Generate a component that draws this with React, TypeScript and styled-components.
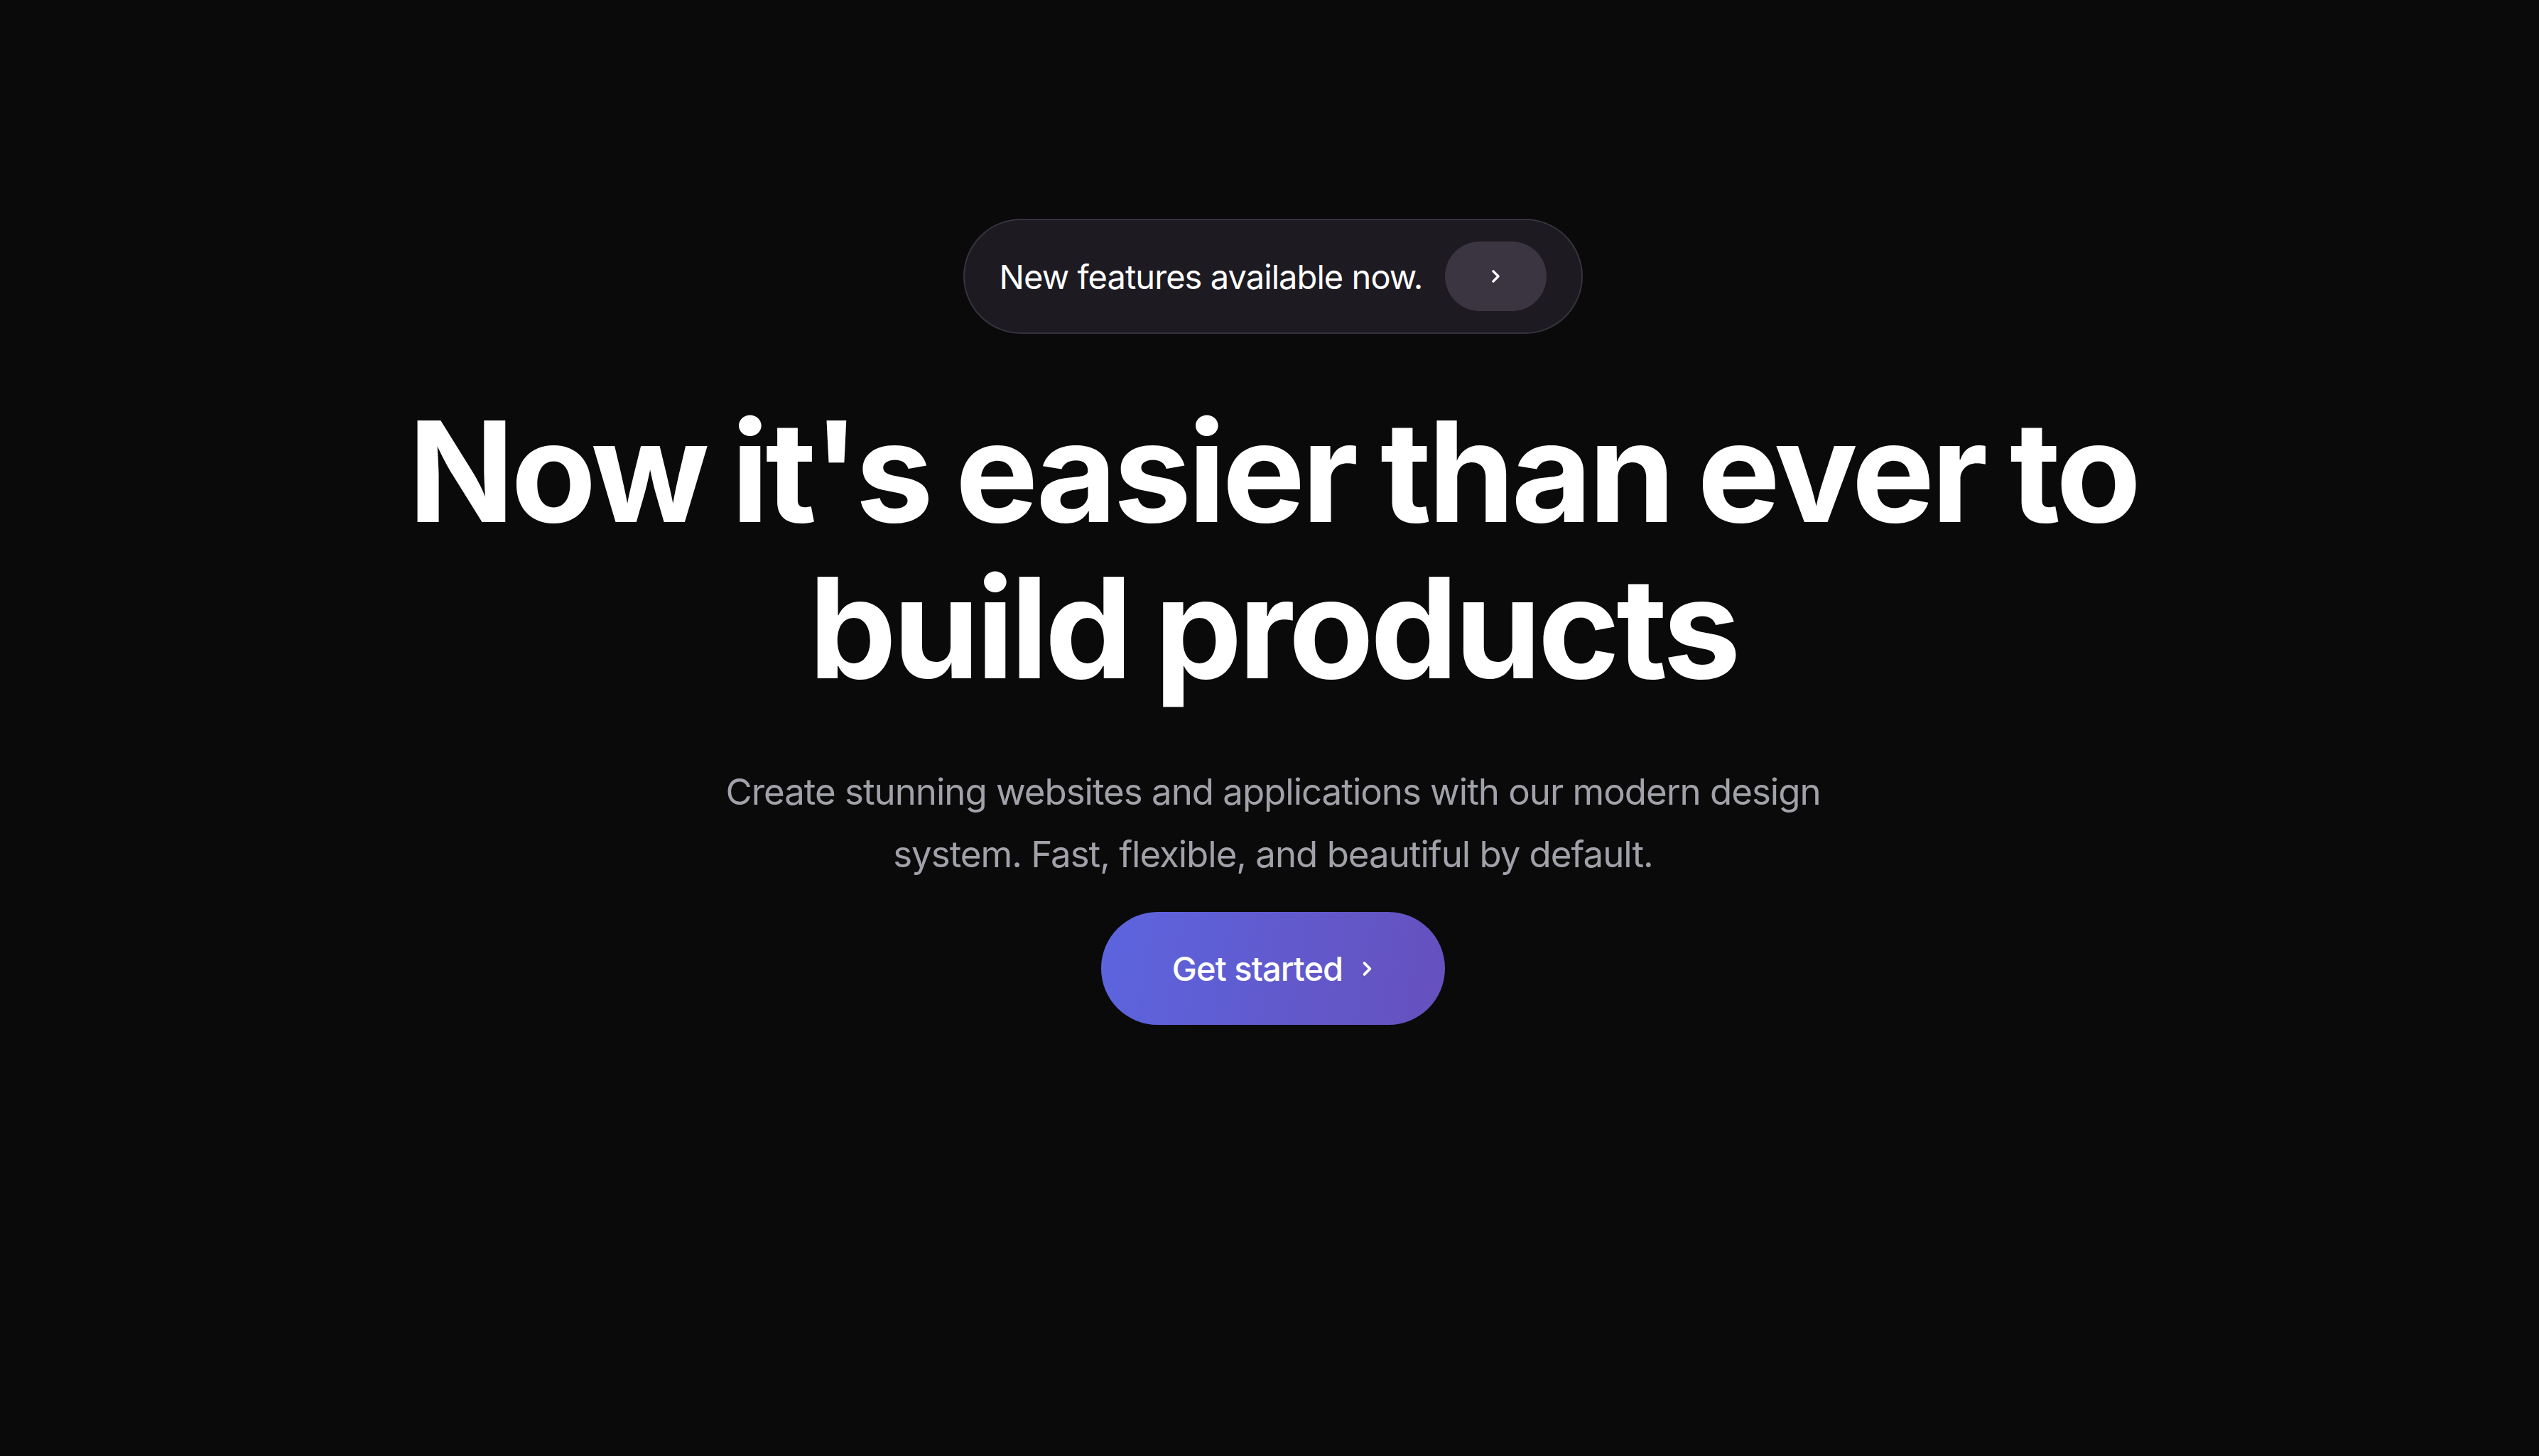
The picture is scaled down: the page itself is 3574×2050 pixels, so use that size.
import React from "react";
import styled, { createGlobalStyle } from "styled-components";

const GlobalStyle = createGlobalStyle`
  html, body {
    margin: 0;
    padding: 0;
    background: #0a0a0a;
  }
  body {
    font-family: Inter, "Noto Sans", "Liberation Sans", sans-serif;
    -webkit-font-smoothing: antialiased;
  }
`;

const Page = styled.main`
  min-height: 100vh;
  background: #0a0a0a;
  display: flex;
  flex-direction: column;
  align-items: center;
  padding: 308px 0 0 10px;
  box-sizing: border-box;
`;

const Badge = styled.a`
  display: inline-flex;
  align-items: center;
  gap: 32px;
  height: 162px;
  box-sizing: border-box;
  padding: 0 49px;
  border: 2px solid #37333f;
  border-radius: 999px;
  background: #1d1a21;
  color: #ffffff;
  text-decoration: none;
`;

const BadgeText = styled.span`
  font-size: 47px;
  font-weight: 400;
  letter-spacing: -0.02em;
  line-height: 1;
`;

const BadgeArrow = styled.span`
  display: flex;
  align-items: center;
  justify-content: center;
  width: 143px;
  height: 98px;
  border-radius: 999px;
  background: #3a3541;
  color: #ffffff;
`;

const Headline = styled.h1`
  margin: 84px 0 0;
  font-size: 196px;
  line-height: 220px;
  font-weight: 700;
  letter-spacing: -0.025em;
  word-spacing: -0.03em;
  color: #ffffff;
  text-align: center;
`;

const Lead = styled.p`
  margin: 77px 0 0;
  max-width: 1600px;
  font-size: 51px;
  line-height: 88px;
  font-weight: 400;
  letter-spacing: -0.02em;
  color: #a1a1aa;
  text-align: center;
`;

const Cta = styled.button`
  margin-top: 37px;
  display: inline-flex;
  align-items: center;
  justify-content: center;
  gap: 25px;
  width: 484px;
  height: 159px;
  border: none;
  border-radius: 999px;
  background: linear-gradient(100deg, #5c65df 0%, #6650bd 100%);
  color: #ffffff;
  font-family: inherit;
  font-size: 47px;
  font-weight: 500;
  letter-spacing: -0.02em;
  cursor: pointer;
`;

const Chevron = ({ size }: { size: number }) => (
  <svg
    width={size * 0.5}
    height={size}
    viewBox="6 0 12 24"
    fill="none"
    stroke="currentColor"
    strokeWidth={2.4}
    strokeLinecap="round"
    strokeLinejoin="round"
  >
    <path d="m9.5 7 5 5-5 5" />
  </svg>
);

export default function App() {
  return (
    <>
      <GlobalStyle />
      <Page>
        <Badge href="#">
          <BadgeText>New features available now.</BadgeText>
          <BadgeArrow>
            <Chevron size={34} />
          </BadgeArrow>
        </Badge>
        <Headline>
          Now it's easier than ever to
          <br />
          build products
        </Headline>
        <Lead>
          Create stunning websites and applications with our modern design
          <br />
          system. Fast, flexible, and beautiful by default.
        </Lead>
        <Cta>
          Get started
          <Chevron size={38} />
        </Cta>
      </Page>
    </>
  );
}
